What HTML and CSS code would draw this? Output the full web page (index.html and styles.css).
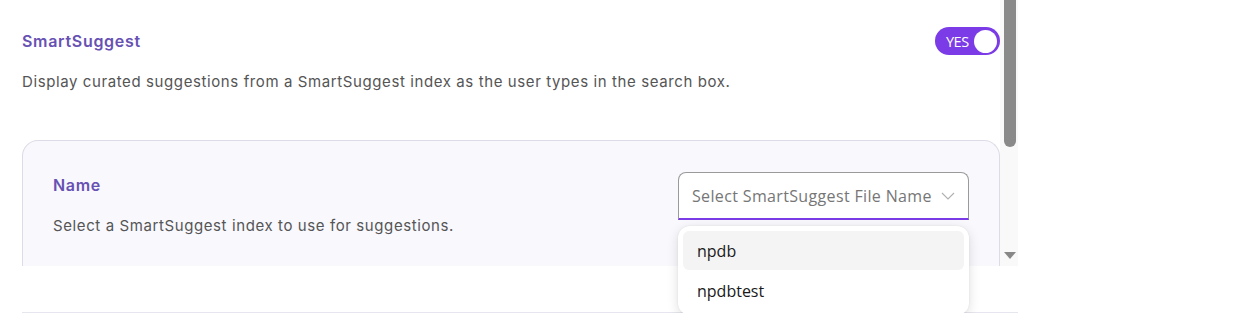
FILE: index.html
```html
<!DOCTYPE html>
<html>
<head>
<meta charset="utf-8">
<link rel="stylesheet" href="styles.css">
</head>
<body>
<div class="page">
  <div class="panel">
    <div class="content">
      <div class="title-row">
        <div class="title">SmartSuggest</div>
        <div class="toggle"><span class="toggle-text">YES</span><span class="knob"></span></div>
      </div>
      <p class="desc">Display curated suggestions from a SmartSuggest index as the user types in the search box.</p>
      <div class="card">
        <div class="card-left">
          <div class="card-title">Name</div>
          <p class="card-desc">Select a SmartSuggest index to use for suggestions.</p>
        </div>
        <div class="select-wrap">
          <div class="select">
            <span class="placeholder">Select SmartSuggest File Name</span>
            <svg class="chev" width="14" height="8" viewBox="0 0 14 8"><path d="M1 1 L7 7 L13 1" fill="none" stroke="#b0b0b0" stroke-width="1.1"/></svg>
          </div>
          <div class="menu">
            <div class="item active">npdb</div>
            <div class="item">npdbtest</div>
          </div>
        </div>
      </div>
    </div>
    <div class="scrollbar">
      <div class="thumb"></div>
      <div class="track"></div>
      <div class="arrow"></div>
      <div class="arrow-space"></div>
    </div>
  </div>
  <div class="footer">
    <div class="rule"></div>
  </div>
</div>
</body>
</html>
```

FILE: styles.css
```css
* { box-sizing: border-box; }
html, body { margin: 0; padding: 0; background: #ffffff; }
body { font-family: Inter, "Noto Sans", sans-serif; }
.page { width: 1018px; }
.panel {
  display: flex;
  height: 266px;
}
.content {
  flex: 1;
  padding-left: 22px;
  padding-top: 27px;
  min-width: 0;
}
.title-row {
  display: flex;
  align-items: center;
  justify-content: space-between;
  height: 28px;
}
.title {
  font-size: 16px;
  font-weight: 600;
  color: #6751b3;
  letter-spacing: 0.7px;
}
.toggle {
  width: 65px;
  height: 28px;
  border-radius: 14px;
  background: #7b3be6;
  display: flex;
  align-items: center;
  justify-content: space-between;
  padding: 0 3px 0 11px;
}
.toggle-text {
  color: #ffffff;
  font-family: "Open Sans", "Noto Sans", sans-serif;
  font-size: 14.5px;
  letter-spacing: -0.5px;
}
.knob {
  width: 23px;
  height: 23px;
  border-radius: 50%;
  background: #ffffff;
}
.desc {
  margin: 17px 0 0;
  font-size: 15px;
  line-height: 20px;
  letter-spacing: 0.6px;
  color: #555555;
}
.card {
  margin-top: 48px;
  background: #f8f8fd;
  border: 1px solid #dcdce6;
  border-bottom: none;
  border-radius: 16px 16px 0 0;
  padding: 31px 30px 0;
  display: flex;
  justify-content: space-between;
  align-items: flex-start;
  height: 126px;
}
.card-title {
  font-size: 16px;
  font-weight: 600;
  color: #6751b3;
  line-height: 24px;
  letter-spacing: 0.7px;
  margin-top: 1px;
}
.card-desc {
  margin: 19px 0 0;
  font-size: 15px;
  line-height: 20px;
  letter-spacing: 0.6px;
  color: #555555;
}
.select-wrap {
  position: relative;
  width: 291px;
}
.select {
  height: 48px;
  background: #ffffff;
  border: 1px solid #9a9a9a;
  border-bottom: 2px solid #7b3be6;
  border-radius: 8px 8px 0 0;
  display: flex;
  align-items: center;
  justify-content: space-between;
  padding: 0 13px 0 13px;
}
.placeholder {
  font-family: "Open Sans", "Noto Sans", sans-serif;
  font-size: 16px;
  color: #767676;
  letter-spacing: 0.35px;
}
.chev { display: block; margin-top: 1px; }
.menu {
  position: absolute;
  left: 0;
  top: 54px;
  width: 291px;
  background: #ffffff;
  border-radius: 12px;
  box-shadow: 0 3px 12px rgba(0, 0, 0, 0.13), 0 0 2px rgba(0, 0, 0, 0.08);
  padding: 5px;
  display: flex;
  flex-direction: column;
  gap: 1px;
  z-index: 5;
}
.item {
  height: 39px;
  display: flex;
  align-items: center;
  padding-left: 14px;
  border-radius: 6px;
  font-family: "Open Sans", "Noto Sans", sans-serif;
  font-size: 16px;
  color: #1a1a1a;
}
.item.active { background: #f4f4f4; }
.scrollbar {
  width: 18px;
  flex: none;
  background: #f9f9f9;
  display: flex;
  flex-direction: column;
  align-items: center;
  padding-left: 4px;
  padding-right: 2px;
}
.thumb {
  width: 12px;
  height: 147px;
  background: #8a8a8a;
  border-radius: 0 0 6px 6px;
}
.track { flex: 1; }
.arrow {
  width: 0;
  height: 0;
  border-left: 6px solid transparent;
  border-right: 6px solid transparent;
  border-top: 7px solid #888888;
}
.arrow-space { height: 7px; }
.footer {
  padding-left: 22px;
  padding-top: 46px;
}
.rule {
  height: 1px;
  background: #e6e6ee;
}
```
